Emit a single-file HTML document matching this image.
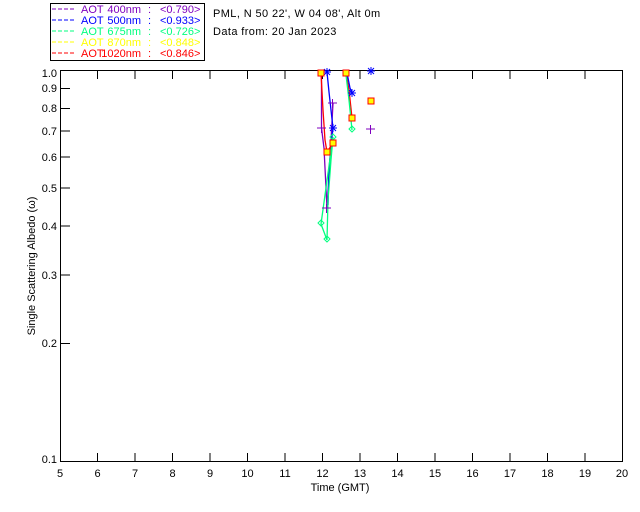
<!DOCTYPE html>
<html><head><style>
html,body{margin:0;padding:0;background:#fff;width:640px;height:512px;overflow:hidden}
svg text{font-family:"Liberation Sans",sans-serif;font-size:11px}
</style></head><body>
<svg width="640" height="512" xmlns="http://www.w3.org/2000/svg">
<rect x="50.5" y="3.5" width="154" height="57" fill="none" stroke="#000"/>
<g font-size="11">
<line x1="52" y1="9" x2="76" y2="9" stroke="#7f00bf" stroke-dasharray="4,2"/>
<g fill="#7f00bf"><text x="81" y="13">AOT</text><text x="141" y="13" text-anchor="end">400nm</text><text x="148" y="13">:</text><text x="160" y="13">&lt;0.790&gt;</text></g>
<line x1="52" y1="20" x2="76" y2="20" stroke="#0000ff" stroke-dasharray="4,2"/>
<g fill="#0000ff"><text x="81" y="24">AOT</text><text x="141" y="24" text-anchor="end">500nm</text><text x="148" y="24">:</text><text x="160" y="24">&lt;0.933&gt;</text></g>
<line x1="52" y1="31" x2="76" y2="31" stroke="#00ff7f" stroke-dasharray="4,2"/>
<g fill="#00ff7f"><text x="81" y="35">AOT</text><text x="141" y="35" text-anchor="end">675nm</text><text x="148" y="35">:</text><text x="160" y="35">&lt;0.726&gt;</text></g>
<line x1="52" y1="42" x2="76" y2="42" stroke="#ffff00" stroke-dasharray="4,2"/>
<g fill="#ffff00"><text x="81" y="46">AOT</text><text x="141" y="46" text-anchor="end">870nm</text><text x="148" y="46">:</text><text x="160" y="46">&lt;0.848&gt;</text></g>
<line x1="52" y1="53" x2="76" y2="53" stroke="#ff0000" stroke-dasharray="4,2"/>
<g fill="#ff0000"><text x="81" y="57">AOT</text><text x="141" y="57" text-anchor="end">1020nm</text><text x="148" y="57">:</text><text x="160" y="57">&lt;0.846&gt;</text></g>
</g>
<text x="213" y="17" fill="#000" letter-spacing="0.4">PML, N 50 22', W 04 08', Alt 0m</text>
<text x="213" y="35" fill="#000" letter-spacing="0.4">Data from: 20 Jan 2023</text>

<g stroke="#000" fill="none">
<rect x="60.5" y="70.5" width="562" height="391"/>
<path d="M97.5 461v-8M135 461v-8M172.5 461v-8M210 461v-8M247.5 461v-8M285 461v-8M322.5 461v-8M360 461v-8M397.5 461v-8M435 461v-8M472.5 461v-8M510 461v-8M547.5 461v-8M585 461v-8"/>
<path d="M97.5 71v8M135 71v8M172.5 71v8M210 71v8M247.5 71v8M285 71v8M322.5 71v8M360 71v8M397.5 71v8M435 71v8M472.5 71v8M510 71v8M547.5 71v8M585 71v8"/>
<path d="M60 88.5h10M60 108.5h10M60 131h10M60 157h10M60 188h10M60 226h10M60 275h10M60 343.5h10"/>
</g>
<g fill="#000" text-anchor="end">
<text x="57" y="77">1.0</text><text x="57" y="92">0.9</text><text x="57" y="112">0.8</text>
<text x="57" y="135">0.7</text><text x="57" y="161">0.6</text><text x="57" y="192">0.5</text>
<text x="57" y="230">0.4</text><text x="57" y="279">0.3</text><text x="57" y="347">0.2</text>
<text x="57" y="463">0.1</text>
</g>
<g fill="#000" text-anchor="middle">
<text x="60" y="477">5</text><text x="97.5" y="477">6</text><text x="135" y="477">7</text><text x="172.5" y="477">8</text>
<text x="210" y="477">9</text><text x="247.5" y="477">10</text><text x="285" y="477">11</text><text x="322.5" y="477">12</text>
<text x="360" y="477">13</text><text x="397.5" y="477">14</text><text x="435" y="477">15</text><text x="472.5" y="477">16</text>
<text x="510" y="477">17</text><text x="547.5" y="477">18</text><text x="585" y="477">19</text><text x="622" y="477">20</text>
<text x="340" y="491">Time (GMT)</text>
<text transform="translate(35 266) rotate(-90)">Single Scattering Albedo (ω)</text>
</g>

<g fill="none" stroke-width="1.3">
<polyline points="321.5,73 321.5,128 324,148 327,208 330,160 333,103" stroke="#7f00bf"/>
<polyline points="327,72 329,92 333,128 331,145 329,170 328,205" stroke="#0000ff"/>
<polyline points="327,240 328,200 331,160 333,137 321,224 327,240" stroke="#00ff7f"/>
<polyline points="321,73 323,110 325,140 327,152 333,143" stroke="#ff0000"/>
<polyline points="346,73 349,90 352,118" stroke="#ff0000"/>
<polyline points="346,75 349,100 352,130" stroke="#00ff7f"/>
<polyline points="347,73 350,88 352,93" stroke="#0000ff"/>
</g>
<g stroke="#7f00bf" stroke-width="1">
<path d="M317 128h9M321.5 124v9M328 103h9M332.5 99v9M322 208h9M326.5 204v9M366 129h9M370.5 125v9"/>
</g>
<g stroke="#0000ff" stroke-width="1">
<path d="M323 72h8M327 68v8M324 69l6 6M330 69l-6 6"/>
<path d="M329 128h8M333 124v8M330 125l6 6M336 125l-6 6"/>
<path d="M348 93h8M352 89v8M349 90l6 6M355 90l-6 6"/>
<path d="M367 71h8M371 67v8M368 68l6 6M374 68l-6 6"/>
</g>
<g stroke="#00ff7f" fill="none">
<path d="M321 220l3 3-3 3-3-3z"/><path d="M327 236l3 3-3 3-3-3z"/><path d="M333 134l3 3-3 3-3-3z"/><path d="M352 126l3 3-3 3-3-3z"/>
</g>
<g stroke="#ff0000" fill="#ffff00" stroke-width="1">
<rect x="318" y="70" width="6" height="6"/><rect x="324" y="149" width="6" height="6"/>
<rect x="330" y="140" width="6" height="6"/><rect x="343" y="70" width="6" height="6"/>
<rect x="349" y="115" width="6" height="6"/><rect x="368" y="98" width="6" height="6"/>
</g>
</svg>
</body></html>
